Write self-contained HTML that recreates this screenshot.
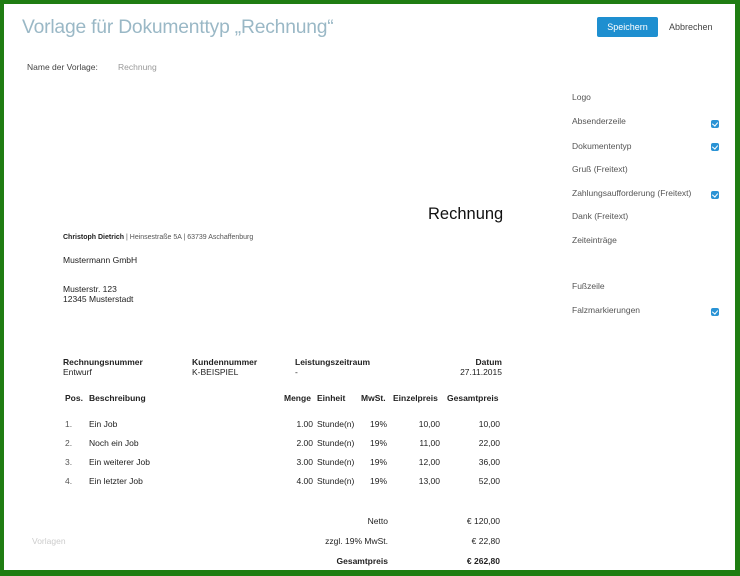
<!DOCTYPE html>
<html><head><meta charset="utf-8"><style>
*{margin:0;padding:0;box-sizing:border-box}
body{width:740px;height:576px;background:#1f7d12;position:relative;overflow:hidden;font-family:"Liberation Sans",sans-serif}
.page{position:absolute;left:4px;top:4px;width:731px;height:566px;background:#fff}
.a{position:absolute;white-space:nowrap;line-height:12px;color:#222}
.r{text-align:right}
.b{font-weight:bold}
.cb{position:absolute;left:711px;width:8px;height:8px;border-radius:2px;background:#2a93d5}
.cb:after{content:"";position:absolute;left:2px;top:1px;width:3px;height:4px;border:solid #fff;border-width:0 1px 1px 0;transform:rotate(40deg)}
.lst{font-size:8.5px;color:#555;left:572px}
.d{font-size:8.5px}
</style></head><body>
<div class="a" style="display:none"></div>
<div class="page"></div>
<div class="a" style="left:22px;top:15px;line-height:26px;font-size:19.3px;color:#9ab8c6;letter-spacing:-0.2px">Vorlage für Dokumenttyp „Rechnung“</div>
<div class="a" style="left:597px;top:17px;width:61px;height:20px;background:#1e8fd0;border-radius:2px;color:#fff;font-size:9px;line-height:20px;text-align:center">Speichern</div>
<div class="a" style="left:669px;top:21px;font-size:9px;color:#444">Abbrechen</div>
<div class="a" style="left:27px;top:61px;font-size:8.5px;color:#444">Name der Vorlage:</div>
<div class="a" style="left:118px;top:61px;font-size:8.5px;color:#999">Rechnung</div>

<div class="a lst" style="top:91px">Logo</div>
<div class="a lst" style="top:115px">Absenderzeile</div><div class="cb" style="top:120px"></div>
<div class="a lst" style="top:140px">Dokumententyp</div><div class="cb" style="top:143px"></div>
<div class="a lst" style="top:163px">Gruß (Freitext)</div>
<div class="a lst" style="top:187px">Zahlungsaufforderung (Freitext)</div><div class="cb" style="top:191px"></div>
<div class="a lst" style="top:210px">Dank (Freitext)</div>
<div class="a lst" style="top:234px">Zeiteinträge</div>
<div class="a lst" style="top:280px">Fußzeile</div>
<div class="a lst" style="top:304px">Falzmarkierungen</div><div class="cb" style="top:308px"></div>

<div class="a" style="left:428px;top:204px;font-size:16.5px;line-height:20px;color:#111">Rechnung</div>
<div class="a" style="left:63px;top:232px;font-size:7px;color:#555"><b style="color:#222">Christoph Dietrich</b> | Heinsestraße 5A | 63739 Aschaffenburg</div>
<div class="a d" style="left:63px;top:254px">Mustermann GmbH</div>
<div class="a d" style="left:63px;top:284px;line-height:10px">Musterstr. 123<br>12345 Musterstadt</div>

<div class="a d" style="left:63px;top:357px;line-height:10px"><b>Rechnungsnummer</b><br>Entwurf</div>
<div class="a d" style="left:192px;top:357px;line-height:10px"><b>Kundennummer</b><br>K-BEISPIEL</div>
<div class="a d" style="left:295px;top:357px;line-height:10px"><b>Leistungszeitraum</b><br>-</div>
<div class="a d r" style="left:440px;width:62px;top:357px;line-height:10px"><b>Datum</b><br>27.11.2015</div>

<div class="a d b" style="left:65px;top:392px">Pos.</div>
<div class="a d b" style="left:89px;top:392px">Beschreibung</div>
<div class="a d b" style="left:284px;top:392px">Menge</div>
<div class="a d b" style="left:317px;top:392px">Einheit</div>
<div class="a d b" style="left:361px;top:392px">MwSt.</div>
<div class="a d b" style="left:393px;top:392px">Einzelpreis</div>
<div class="a d b" style="left:447px;top:392px">Gesamtpreis</div>

<div class="a d" style="left:65px;top:415px;line-height:19px;color:#555">1.<br>2.<br>3.<br>4.</div>
<div class="a d" style="left:89px;top:415px;line-height:19px">Ein Job<br>Noch ein Job<br>Ein weiterer Job<br>Ein letzter Job</div>
<div class="a d r" style="left:270px;width:43px;top:415px;line-height:19px">1.00<br>2.00<br>3.00<br>4.00</div>
<div class="a d" style="left:317px;top:415px;line-height:19px">Stunde(n)<br>Stunde(n)<br>Stunde(n)<br>Stunde(n)</div>
<div class="a d" style="left:370px;top:415px;line-height:19px">19%<br>19%<br>19%<br>19%</div>
<div class="a d r" style="left:400px;width:40px;top:415px;line-height:19px">10,00<br>11,00<br>12,00<br>13,00</div>
<div class="a d r" style="left:460px;width:40px;top:415px;line-height:19px">10,00<br>22,00<br>36,00<br>52,00</div>

<div class="a d r" style="left:288px;width:100px;top:511px;line-height:20px">Netto<br>zzgl. 19% MwSt.<br><b>Gesamtpreis</b></div>
<div class="a d r" style="left:420px;width:80px;top:511px;line-height:20px">€ 120,00<br>€ 22,80<br><b>€ 262,80</b></div>
<div class="a" style="left:32px;top:535px;font-size:8.5px;color:#ccc">Vorlagen</div>
</body></html>
